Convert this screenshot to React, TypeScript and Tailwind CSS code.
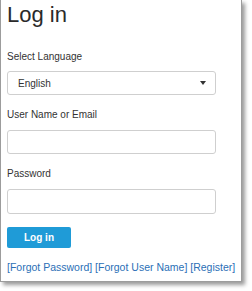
export default function App() {
  const label = "block text-[10px] leading-[14px] text-[#333]";
  const field =
    "block w-[209px] rounded-[3px] border border-[#cfcfcf] bg-white";

  return (
    <div className="h-[291px] w-[252px] bg-white font-['Liberation_Sans',Arial,sans-serif]">
      <div className="w-[242px] border-x border-b border-[#9c9c9c] bg-white pb-[7px] pl-[6px] pt-[2px] shadow-[3px_3px_4px_rgba(0,0,0,0.4)]">
        <h1 className="text-[22px] leading-[26px] text-[#2a2a2a]">Log in</h1>

        <label className={`${label} mt-[22px]`}>Select Language</label>
        <div className={`${field} mt-[7px] flex h-[24px] items-center justify-between pl-[10px] pr-[9px]`}>
          <span className="text-[10px] text-[#333]">English</span>
          <svg width="6" height="4" viewBox="0 0 6 4">
            <path d="M0 0h6L3 4z" fill="#333" />
          </svg>
        </div>

        <label className={`${label} mt-[13px]`}>User Name or Email</label>
        <div className={`${field} mt-[8px] h-[24px]`} />

        <label className={`${label} mt-[13px]`}>Password</label>
        <div className={`${field} mt-[8px] h-[25px]`} />

        <button
          type="button"
          className="mt-[13px] block h-[21px] w-[64px] rounded-[2px] bg-[#1f9bd7] text-[10px] font-bold text-white"
        >
          Log in
        </button>

        <p className="mt-[12px] text-[10.5px] leading-[14px] text-[#2b6fb6]">
          [Forgot Password] [Forgot User Name] [Register]
        </p>
      </div>
    </div>
  );
}
